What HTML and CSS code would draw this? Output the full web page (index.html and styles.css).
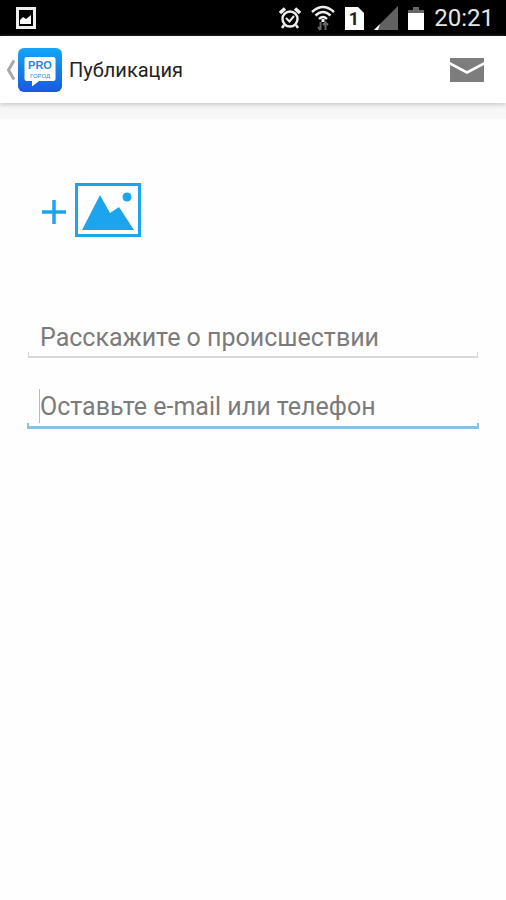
FILE: index.html
```html
<!DOCTYPE html>
<html lang="ru">
<head>
  <meta charset="UTF-8" />
  <meta name="viewport" content="width=device-width, initial-scale=1.0" />
  <title>Публикация</title>
  <link rel="stylesheet" href="styles.css">
</head>
<body>
  <div class="status-bar">
    <svg class="status-picture" width="20" height="22" viewBox="0 0 20 22">
      <rect x="1.5" y="1.5" width="17" height="19" fill="none" stroke="#eee" stroke-width="3" />
      <path d="M4 17V13L7 10L10 12L15 8V17Z" fill="#fff" />
    </svg>
    <div class="status-icons">
      <svg width="22" height="24" viewBox="0 0 22 24" fill="none" stroke="#eee">
        <circle cx="11" cy="13" r="7.5" stroke-width="2.4" />
        <path d="M7 12L10.500 15.500L15 10" stroke-width="2" />
        <path d="M1 7L6 2.500M21 7L16 2.500" stroke-width="3.500" />
        <path d="M5 19L3 22M17 19L19 22" stroke-width="2.500" />
      </svg>
      <svg width="24" height="26" viewBox="0 0 24 26" fill="none" stroke="#eee" stroke-width="2.400">
        <path d="M1 7Q12 -3 23 7" />
        <path d="M4.500 10.500Q12 3.500 19.500 10.500" />
        <path d="M8 14Q12 10 16 14" />
        <path d="M12 14V17" stroke-width="3" />
        <path d="M9.500 17V25M7 22L9.500 25M14.500 25V17M12 20L14.500 17.500L17 20" stroke="#666" stroke-width="2" />
      </svg>
      <svg width="19" height="23" viewBox="0 0 19 23">
        <path d="M0 0H13L19 6V23H0Z" fill="#fff" />
        <text class="sim-number" x="9" y="18" text-anchor="middle">1</text>
      </svg>
      <svg width="24" height="24" viewBox="0 0 24 24">
        <path d="M0 24L24 0V24Z" fill="#626262" />
        <path d="M0 24L6 18L4 24Z" fill="#fff" />
      </svg>
      <svg width="16" height="23" viewBox="0 0 16 23">
        <path d="M5 0H11V3H16V7H0V3H5Z" fill="#666" />
        <path d="M0 6H16V23H0Z" fill="#fff" />
      </svg>
      <span class="clock">20:21</span>
    </div>
  </div>

  <header class="action-bar">
    <button type="button" class="back-btn" aria-label="Назад">
      <svg width="9" height="22" viewBox="0 0 9 22" fill="none" stroke="#a8a8a8" stroke-width="3">
        <path d="M8 1.500L2.500 11L8 20.500" />
      </svg>
      <svg class="app-logo" width="46" height="46" viewBox="0 0 46 46">
        <defs>
          <linearGradient id="logoFill" x1="0" y1="0" x2="0" y2="1">
            <stop offset="0" stop-color="#14a5f8" />
            <stop offset="1" stop-color="#1859df" />
          </linearGradient>
        </defs>
        <rect x="1" y="1" width="44" height="44" rx="6" fill="url(#logoFill)" />
        <path d="M9.500 10H36.500Q38.500 10 38.500 12V32Q38.500 34 36.500 34H22L15 39.500V34H9.500Q7.500 34 7.500 32V12Q7.500 10 9.500 10Z" fill="#fff" />
        <text class="logo-pro" x="23" y="22" text-anchor="middle">PRO</text>
        <text class="logo-city" x="23" y="31" text-anchor="middle">ГОРОД</text>
      </svg>
    </button>
    <h1>Публикация</h1>
    <button type="submit" form="postForm" class="send-btn" aria-label="Отправить">
      <svg width="34" height="24" viewBox="0 0 34 24" fill="#7d7d7d">
        <path d="M0 0H34V4L17 13L0 4Z" />
        <path d="M0 7L17 16L34 7V24H0Z" />
      </svg>
    </button>
  </header>

  <main>
    <form id="postForm">
      <button type="button" class="add-photo" aria-label="Добавить фото">
        <svg width="26" height="30" viewBox="0 0 26 30" stroke="#1ca4ef" stroke-width="3.500">
          <path d="M13 5V29M1 17H25" />
        </svg>
        <svg width="66" height="54" viewBox="0 0 66 54" fill="#1ca4ef">
          <rect x="1.500" y="1.500" width="63" height="51" fill="#fff" stroke="#1ca4ef" stroke-width="3" />
          <path d="M7 47L25 12L35 30L44 24L59 47Z" />
          <circle cx="52" cy="14" r="4.500" />
        </svg>
      </button>

      <div class="field">
        <input type="text" name="story" aria-label="Расскажите о происшествии" placeholder="Расскажите о происшествии" />
      </div>
      <div class="field active">
        <input type="text" name="contact" aria-label="Оставьте e-mail или телефон" placeholder="Оставьте e-mail или телефон" />
      </div>
    </form>
  </main>
</body>
</html>
```
FILE: styles.css
```css
*,
*::before,
*::after {
  margin: 0;
  padding: 0;
  box-sizing: border-box;
}

body {
  font-family: Roboto, sans-serif;
  background: #fefefe;
  min-height: 100vh;
}

svg {
  display: block;
  flex-shrink: 0;
}

button {
  border: none;
  background: none;
  cursor: pointer;
}

.status-bar {
  height: 36px;
  padding: 0 12px 0 16px;
  background: #000;
  display: flex;
  align-items: center;
  justify-content: space-between;
}

.status-icons {
  display: flex;
  align-items: center;
  gap: 10px;
}

.clock {
  color: #e6e6e6;
  font-size: 24px;
  line-height: 36px;
}

.sim-number {
  font-size: 18px;
  font-weight: 700;
  fill: #222;
}

.action-bar {
  height: 67px;
  padding: 0 22px 0 6px;
  background: #fff;
  box-shadow: 0 2px 4px #ccc, 0 16px 0 #f7f7f7;
  display: flex;
  align-items: center;
}

.back-btn {
  display: flex;
  align-items: center;
  gap: 2px;
}

.logo-pro {
  font-size: 11px;
  font-weight: 900;
  fill: #2587e8;
}

.logo-city {
  font-size: 6px;
  font-weight: 500;
  fill: #2587e8;
}

h1 {
  flex: 1;
  margin-left: 6px;
  color: #222;
  font-size: 20px;
  font-weight: 400;
}

main {
  padding: 80px 27px 0;
}

.add-photo {
  display: flex;
  align-items: center;
  gap: 8px;
  margin: 0 0 83px 14px;
}

.field {
  position: relative;
  padding: 0 12px 4px;
  margin: 0 1px 31px;
}

/* bracket-shaped underline */
.field::after {
  content: "";
  position: absolute;
  left: 0;
  right: 0;
  bottom: 0;
  height: 6px;
  border: 1px solid #d8d8d8;
  border-width: 0 1px 2px;
  pointer-events: none;
}

.field input {
  display: block;
  width: 100%;
  height: 34px;
  border: none;
  outline: none;
  background: none;
  color: #333;
  font-family: inherit;
  font-size: 25px;
}

.field input::placeholder {
  color: #7b7b7b;
  opacity: 1;
}

.field.active {
  margin: 0;
  padding: 0 13px 6px;
}

.field.active::after {
  border-color: #8fbfdf;
  border-width: 0 2px 3px;
}

/* text cursor */
.field.active::before {
  content: "";
  position: absolute;
  left: 12px;
  top: 0;
  width: 1px;
  height: 34px;
  background: #bbb;
}
```
